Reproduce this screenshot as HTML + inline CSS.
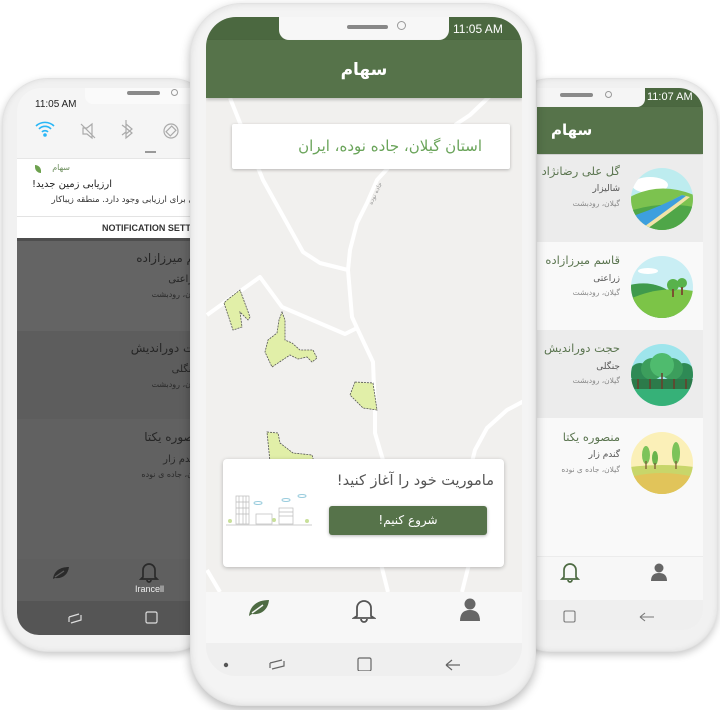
<!DOCTYPE html>
<html><head><meta charset="utf-8">
<style>
*{margin:0;padding:0;box-sizing:border-box}
body{width:720px;height:710px;background:#fff;position:relative;overflow:hidden;font-family:"Liberation Sans","Noto Sans CJK SC",sans-serif}
.abs{position:absolute}
.frame{position:absolute;background:#f1f1f1;box-shadow:0 3px 8px rgba(0,0,0,.22),inset 0 0 6px rgba(0,0,0,.08);border:1px solid #e2e2e2}
.fa{font-family:"DejaVu Sans","Liberation Sans",sans-serif;direction:rtl}
</style></head><body>

<!-- LEFT PHONE -->
<div class="frame" style="left:2px;top:78px;width:215px;height:574px;border-radius:46px"></div>
<div class="abs" style="left:17px;top:88px;width:175px;height:547px;border-radius:24px 0 0 22px;overflow:hidden;background:#f5f5f5">
  <div class="abs" style="left:68px;top:0;width:120px;height:16px;background:#fafafa;border-radius:0 0 0 8px"></div>
  <div class="abs" style="left:110px;top:3px;width:33px;height:4px;background:#8a8a8a;border-radius:3px"></div>
  <div class="abs" style="left:154px;top:1px;width:7px;height:7px;border:1px solid #999;border-radius:50%"></div>
  <div class="abs" style="left:18px;top:11px;font-size:10px;color:#222">11:05 AM</div>
  <svg class="abs" style="left:0;top:30px" width="175" height="30">
    <g fill="none" stroke="#29b6f6" stroke-width="1.6"><path d="M19 8a13 13 0 0 1 18 0M22 11a8 8 0 0 1 12 0M25 14a4 4 0 0 1 6 0"/><circle cx="28" cy="17" r="1" fill="#29b6f6"/></g>
    <g fill="none" stroke="#aaa" stroke-width="1.2"><path d="M66 10h4l5-4v14l-5-4h-4zM64 6l14 14"/><path d="M109 6l6 5-6 5v-14 0M109 10l-4 -3M109 14l-4 3M109 6l6 5-6 5v4l6-5-6-5"/><circle cx="154" cy="13" r="7"/><rect x="151" y="9" width="6" height="8" transform="rotate(45 154 13)"/></g>
  </svg>
  <div class="abs" style="left:128px;top:63px;width:11px;height:2px;background:#999"></div>
  <div class="abs" style="left:0;top:70px;width:200px;height:58px;background:#fff;border-top:1px solid #e6e6e6"></div>
  <div class="abs fa" style="right:122px;top:75px;font-size:8px;color:#6a8c5a">سهام</div>
  <div class="abs" style="left:18px;top:77px;width:6px;height:8px;background:#6da14e;border-radius:0 6px 0 6px"></div>
  <div class="abs fa" style="right:80px;top:91px;font-size:10px;color:#222;white-space:nowrap">ارزیابی زمین جدید!</div>
  <div class="abs fa" style="right:-40px;top:107px;font-size:8.5px;color:#333;white-space:nowrap">زمین جدیدی برای ارزیابی وجود دارد. منطقه زیباکار</div>
  <div class="abs" style="left:0;top:128px;width:200px;height:22px;background:#fff;border-top:1px solid #e3e3e3"></div>
  <div class="abs" style="left:85px;top:135px;font-size:9px;font-weight:bold;color:#333;white-space:nowrap">NOTIFICATION SETTINGS</div>
  <div class="abs" style="left:0;top:150px;width:200px;height:3px;background:#4e4e4e"></div>
  <div class="abs" style="left:0;top:153px;width:200px;height:90px;background:#646464"></div>
  <div class="abs" style="left:0;top:243px;width:200px;height:88px;background:#5d5d5d"></div>
  <div class="abs" style="left:0;top:331px;width:200px;height:140px;background:#616161"></div>
  <div class="abs fa" style="right:-22px;top:163px;font-size:12px;color:#262626;white-space:nowrap">قاسم میرزازاده</div>
  <div class="abs fa" style="right:-6px;top:186px;font-size:10px;color:#262626">زراعتی</div>
  <div class="abs fa" style="right:-10px;top:202px;font-size:8px;color:#2a2a2a;white-space:nowrap">گیلان، رودبشت</div>
  <div class="abs fa" style="right:-18px;top:253px;font-size:12px;color:#262626;white-space:nowrap">حجت دوراندیش</div>
  <div class="abs fa" style="right:-6px;top:276px;font-size:10px;color:#262626">جنگلی</div>
  <div class="abs fa" style="right:-10px;top:292px;font-size:8px;color:#2a2a2a;white-space:nowrap">گیلان، رودبشت</div>
  <div class="abs fa" style="right:-12px;top:342px;font-size:12px;color:#262626;white-space:nowrap">منصوره یکتا</div>
  <div class="abs fa" style="right:-6px;top:366px;font-size:10px;color:#262626">گندم زار</div>
  <div class="abs fa" style="right:-12px;top:382px;font-size:8px;color:#2a2a2a;white-space:nowrap">گیلان، جاده ی نوده</div>
  <div class="abs" style="left:0;top:471px;width:200px;height:42px;background:#5f5f5f"></div>
  <svg class="abs" style="left:34px;top:477px" width="20" height="16"><path d="M2 14C3 6 9 2 18 2 17 10 11 14 4 13L2 14z" fill="#2a2a2a"/><path d="M4 12L13 6" stroke="#5f5f5f" stroke-width="1.2"/></svg>
  <svg class="abs" style="left:122px;top:473px" width="20" height="22"><path d="M4 16V9a6 6 0 0 1 12 0v7l2 2H2zM8 19a2 2 0 0 0 4 0" fill="none" stroke="#2a2a2a" stroke-width="1.7"/></svg>
  <div class="abs" style="left:118px;top:496px;font-size:9px;color:#eee">Irancell</div>
  <div class="abs" style="left:0;top:513px;width:200px;height:34px;background:#555"></div>
  <svg class="abs" style="left:50px;top:522px" width="120" height="16"><path d="M2 7l10-3M2 7v5M14 5v5l-10 3" fill="none" stroke="#ddd" stroke-width="1.2"/><rect x="79" y="2" width="11" height="11" rx="1.5" fill="none" stroke="#ddd" stroke-width="1.2"/></svg>
</div>

<!-- RIGHT PHONE -->
<div class="frame" style="left:505px;top:78px;width:213px;height:574px;border-radius:46px"></div>
<div class="abs" style="left:537px;top:88px;width:166px;height:542px;border-radius:0 24px 20px 0;overflow:hidden;background:#f9f9f9">
  <div class="abs" style="left:0;top:0;width:166px;height:19px;background:#4b6840"></div>
  <div class="abs" style="left:0;top:0;width:108px;height:19px;background:#f5f5f5;border-radius:0 0 8px 0"></div>
  <div class="abs" style="left:23px;top:5px;width:33px;height:4px;background:#8a8a8a;border-radius:3px"></div>
  <div class="abs" style="left:68px;top:3px;width:7px;height:7px;border:1px solid #999;border-radius:50%"></div>
  <div class="abs" style="left:110px;top:3px;font-size:11px;color:#fff">11:07 AM</div>
  <div class="abs" style="left:0;top:19px;width:166px;height:47px;background:#56734a;box-shadow:0 2px 3px rgba(0,0,0,.2)"></div>
  <div class="abs fa" style="left:14px;top:33px;font-size:15px;font-weight:bold;color:#fff">سهام</div>
  <div class="abs" style="left:0;top:67px;width:166px;height:87px;background:#ececec"></div>
  <div class="abs" style="left:0;top:154px;width:166px;height:88px;background:#f9f9f9"></div>
  <div class="abs" style="left:0;top:242px;width:166px;height:88px;background:#ececec"></div>
  <div class="abs" style="left:0;top:330px;width:166px;height:138px;background:#f9f9f9"></div>
  <div class="abs fa" style="right:83px;top:76px;font-size:11.5px;color:#5b7550;white-space:nowrap">گل علی رضانژاد</div>
  <div class="abs fa" style="right:83px;top:96px;font-size:9px;color:#555">شالیزار</div>
  <div class="abs fa" style="right:83px;top:111px;font-size:7.5px;color:#888;white-space:nowrap">گیلان، رودبشت</div>
  <div class="abs fa" style="right:83px;top:165px;font-size:11.5px;color:#5b7550;white-space:nowrap">قاسم میرزازاده</div>
  <div class="abs fa" style="right:83px;top:186px;font-size:9px;color:#555">زراعتی</div>
  <div class="abs fa" style="right:83px;top:200px;font-size:7.5px;color:#888;white-space:nowrap">گیلان، رودبشت</div>
  <div class="abs fa" style="right:83px;top:253px;font-size:11.5px;color:#5b7550;white-space:nowrap">حجت دوراندیش</div>
  <div class="abs fa" style="right:83px;top:274px;font-size:9px;color:#555">جنگلی</div>
  <div class="abs fa" style="right:83px;top:288px;font-size:7.5px;color:#888;white-space:nowrap">گیلان، رودبشت</div>
  <div class="abs fa" style="right:83px;top:342px;font-size:11.5px;color:#5b7550;white-space:nowrap">منصوره یکتا</div>
  <div class="abs fa" style="right:83px;top:362px;font-size:9px;color:#555">گندم زار</div>
  <div class="abs fa" style="right:83px;top:377px;font-size:7.5px;color:#888;white-space:nowrap">گیلان، جاده ی نوده</div>
  <svg class="abs" style="left:93px;top:79px" width="64" height="64"><defs><clipPath id="c1"><circle cx="32" cy="32" r="31"/></clipPath></defs><g clip-path="url(#c1)"><rect width="64" height="64" fill="#bdecef"/><ellipse cx="20" cy="18" rx="18" ry="8" fill="#fff"/><path d="M0 30Q30 14 64 28V64H0z" fill="#7cc24f"/><path d="M0 44Q30 34 64 40V64H0z" fill="#4fa648"/><path d="M0 52Q30 40 52 28L60 30Q40 46 14 64H0z" fill="#f1e3a8"/><path d="M0 50Q30 40 52 28L56 29Q36 44 8 64H0z" fill="#3d9fde"/></g></svg>
  <svg class="abs" style="left:93px;top:167px" width="64" height="64"><defs><clipPath id="c2"><circle cx="32" cy="32" r="31"/></clipPath></defs><g clip-path="url(#c2)"><rect width="64" height="64" fill="#c9eef4"/><ellipse cx="18" cy="16" rx="10" ry="3" fill="#fff"/><path d="M0 30Q25 24 45 40V64H0z" fill="#3f9a4c"/><path d="M0 44Q30 30 64 36V64H0z" fill="#7cc447"/><circle cx="43" cy="30" r="6" fill="#58b24b"/><circle cx="52" cy="28" r="5" fill="#58b24b"/><rect x="42" y="34" width="2" height="8" fill="#7a5230"/><rect x="51" y="32" width="2" height="8" fill="#7a5230"/></g></svg>
  <svg class="abs" style="left:93px;top:255px" width="64" height="64"><defs><clipPath id="c3"><circle cx="32" cy="32" r="31"/></clipPath></defs><g clip-path="url(#c3)"><rect width="64" height="64" fill="#9ee5ec"/><path d="M0 46H64V64H0z" fill="#36b178"/><circle cx="10" cy="30" r="10" fill="#2e8a55"/><circle cx="54" cy="30" r="10" fill="#2e8a55"/><circle cx="22" cy="26" r="11" fill="#3c9e5c"/><circle cx="42" cy="26" r="11" fill="#3c9e5c"/><circle cx="32" cy="22" r="12" fill="#4fbb6e"/><rect x="0" y="36" width="64" height="10" fill="#2c7a4a"/><g stroke="#6b3d2a" stroke-width="1.5"><path d="M8 36v10M20 36v10M32 30v16M44 36v10M56 36v10"/></g></g></svg>
  <svg class="abs" style="left:93px;top:343px" width="64" height="64"><defs><clipPath id="c4"><circle cx="32" cy="32" r="31"/></clipPath></defs><g clip-path="url(#c4)"><rect width="64" height="64" fill="#fbf0b8"/><path d="M0 36Q32 32 64 36V64H0z" fill="#c8d66a"/><path d="M0 46Q32 38 64 46V64H0z" fill="#e1c45a"/><ellipse cx="16" cy="24" rx="4" ry="9" fill="#7cc35a"/><ellipse cx="25" cy="27" rx="3" ry="7" fill="#6bb44c"/><ellipse cx="46" cy="22" rx="4" ry="11" fill="#7cc35a"/><g stroke="#7a5230" stroke-width="1.2"><path d="M16 30v8M25 32v6M46 30v8"/></g></g></svg>
  <div class="abs" style="left:0;top:468px;width:166px;height:44px;background:#f7f7f7;border-top:1px solid #ececec"></div>
  <svg class="abs" style="left:23px;top:473px" width="20" height="22"><path d="M4 16V9a6 6 0 0 1 12 0v7l2 2H2zM8 19a2 2 0 0 0 4 0" fill="none" stroke="#4e6b43" stroke-width="1.7"/></svg>
  <svg class="abs" style="left:113px;top:474px" width="18" height="20"><circle cx="9" cy="6" r="4.5" fill="#666"/><path d="M1 19Q1 11 9 11Q17 11 17 19z" fill="#666"/></svg>
  <div class="abs" style="left:0;top:512px;width:166px;height:30px;background:#efefef"></div>
  <svg class="abs" style="left:25px;top:521px" width="120" height="16"><rect x="2" y="2" width="11" height="11" rx="1.5" fill="none" stroke="#777" stroke-width="1.1"/><path d="M92 8H78M78 8l5-4M78 8l5 4" fill="none" stroke="#777" stroke-width="1.1"/></svg>
</div>

<!-- CENTER PHONE -->
<div class="frame" style="left:190px;top:3px;width:346px;height:703px;border-radius:52px;background:#f4f4f4;box-shadow:0 4px 10px rgba(0,0,0,.28),inset 0 0 8px rgba(0,0,0,.1)"></div>
<div class="abs" style="left:206px;top:17px;width:316px;height:659px;border-radius:30px;overflow:hidden;background:#f1f0ee">
  <div class="abs" style="left:0;top:0;width:316px;height:23px;background:#4b6840"></div>
  <div class="abs" style="left:73px;top:0;width:170px;height:23px;background:#f7f7f7;border-radius:0 0 10px 10px"></div>
  <div class="abs" style="left:141px;top:8px;width:41px;height:4px;background:#888;border-radius:3px"></div>
  <div class="abs" style="left:191px;top:4px;width:9px;height:9px;border:1.5px solid #999;border-radius:50%"></div>
  <div class="abs" style="left:247px;top:5px;font-size:12px;color:#fff">11:05 AM</div>
  <div class="abs" style="left:0;top:23px;width:316px;height:58px;background:#56734a;box-shadow:0 2px 3px rgba(0,0,0,.2);z-index:2"></div>
  <div class="abs fa" style="left:0;top:43px;width:316px;text-align:center;font-size:17px;font-weight:bold;color:#fff;z-index:3">سهام</div>
  <svg class="abs" style="left:-206px;top:-17px" width="720" height="710">
    <g fill="none" stroke="#fff" stroke-width="4" stroke-linejoin="round">
      <path d="M230 98L263 180L303 252L320 263L348 270"/>
      <path d="M490 96L470 115L455 125"/>
      <path d="M388 168L377 180L367 203L357 223L350 250L348 270L352 317L357 328L373 362L375 413L375 433L383 460"/>
      <path d="M380 560L388 592"/>
      <path d="M207 315L260 277L282 307L345 334L357 328"/>
      <path d="M524 401L507 410L487 428L475 450L472 462"/>
      <path d="M470 560L462 592"/>
      <path d="M207 570L220 592"/>
    </g>
    <g fill="#e1efa8" stroke="#555" stroke-width=".8" stroke-dasharray="2 1">
      <path d="M227 300L240 290L250 317L248 320L240 312L242 327L233 330L224 303z"/>
      <path d="M282 312L285 320L285 340L292 343L300 350L313 350L317 358L312 362L307 357L298 359L290 355L272 367L265 352L268 340L277 333L279 320z"/>
      <path d="M355 382L373 383L377 410L363 408L350 395z"/>
      <path d="M267 432L278 433L280 443L293 453L312 455L314 462L270 462z"/>
    </g>
    <text x="372" y="205" font-size="6" fill="#999" transform="rotate(-65 372 205)" font-family="DejaVu Sans">جاده نوده</text>
  </svg>
  <div class="abs" style="left:26px;top:107px;width:278px;height:45px;background:#fff;box-shadow:0 1px 3px rgba(0,0,0,.25);border-radius:2px"></div>
  <div class="abs fa" style="right:40px;top:120px;font-size:15px;color:#6aa45a;white-space:nowrap">استان گیلان، جاده نوده، ایران</div>
  <div class="abs" style="left:17px;top:442px;width:281px;height:108px;background:#fff;box-shadow:0 1px 4px rgba(0,0,0,.25);border-radius:4px"></div>
  <div class="abs fa" style="right:28px;top:456px;font-size:14.5px;color:#555;white-space:nowrap">ماموریت خود را آغاز کنید!</div>
  <div class="abs" style="left:123px;top:489px;width:158px;height:29px;background:#56734a;border-radius:3px;box-shadow:0 1px 3px rgba(0,0,0,.3)"></div>
  <div class="abs fa" style="left:123px;top:496px;width:158px;text-align:center;font-size:12px;color:#fff">شروع کنیم!</div>
  <svg class="abs" style="left:18px;top:473px" width="92" height="38"><g fill="none" stroke="#bbb" stroke-width=".7"><rect x="12" y="6" width="13" height="28"/><path d="M15 6v28M19 6v28M22 6v28M12 12h13M12 18h13M12 24h13"/><rect x="32" y="24" width="16" height="10"/><rect x="55" y="18" width="14" height="16"/><path d="M55 22h14M55 26h14"/><path d="M2 35h86"/></g><ellipse cx="34" cy="13" rx="4" ry="1.5" fill="none" stroke="#9cd"/><ellipse cx="62" cy="10" rx="4" ry="1.5" fill="none" stroke="#9cd"/><ellipse cx="78" cy="6" rx="4" ry="1.5" fill="none" stroke="#9cd"/><g fill="#c8e09a"><circle cx="6" cy="31" r="2"/><circle cx="50" cy="30" r="2"/><circle cx="83" cy="31" r="2"/></g></svg>
  <div class="abs" style="left:0;top:575px;width:316px;height:51px;background:#f7f7f7"></div>
  <svg class="abs" style="left:41px;top:581px" width="24" height="20"><path d="M2 18C3 8 10 2 22 2 21 12 14 17 5 16L2 18z" fill="#4e6b43"/><path d="M5 15L16 7" stroke="#f7f7f7" stroke-width="1.5"/></svg>
  <svg class="abs" style="left:146px;top:580px" width="24" height="26"><path d="M5 19V11a7 7 0 0 1 14 0v8l3 2H2zM9 22a3 3 0 0 0 6 0" fill="none" stroke="#555" stroke-width="1.8"/></svg>
  <svg class="abs" style="left:253px;top:580px" width="22" height="26"><circle cx="11" cy="7" r="5.5" fill="#666"/><path d="M1 24Q1 13 11 13Q21 13 21 24z" fill="#666"/></svg>
  <div class="abs" style="left:0;top:626px;width:316px;height:33px;background:#efefef"></div>
  <svg class="abs" style="left:10px;top:638px" width="260" height="16"><circle cx="10" cy="10" r="2.2" fill="#555"/><path d="M54 8l12-3M54 8v5M68 6v5l-12 3" fill="none" stroke="#666" stroke-width="1.2"/><rect x="142" y="3" width="13" height="13" rx="1.5" fill="none" stroke="#666" stroke-width="1.2"/><path d="M244 10H230M230 10l6-5M230 10l6 5" fill="none" stroke="#666" stroke-width="1.2"/></svg>
</div>
</body></html>
